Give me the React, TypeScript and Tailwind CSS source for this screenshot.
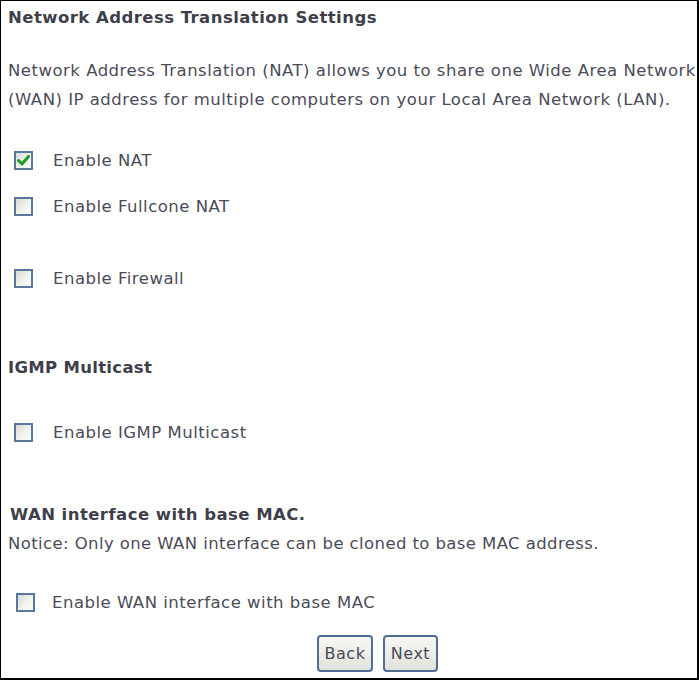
import React from "react";

const font = { fontFamily: '"DejaVu Sans", Tahoma, Verdana, sans-serif' };

function Check({ checked }: { checked?: boolean }) {
  return (
    <span className="flex h-[19px] w-[19px] shrink-0 items-center justify-center border-2 border-[#56799c] bg-gradient-to-br from-[#d8d8d4] via-[#f0f0ec] to-[#fbfbfa]">
      {checked && (
        <svg width="13" height="11" viewBox="0 0 13 11">
          <path d="M1.5 5.5 L5 9 L11.5 1.5" fill="none" stroke="#1f9a1f" strokeWidth="3" strokeLinecap="round" strokeLinejoin="round" />
        </svg>
      )}
    </span>
  );
}

function Row({ label, checked, className, gap = "ml-[20px]" }: { label: string; checked?: boolean; className: string; gap?: string }) {
  return (
    <div className={`flex h-[23px] items-center ${className}`}>
      <Check checked={checked} />
      <span className={gap}>{label}</span>
    </div>
  );
}

export default function App() {
  return (
    <div
      style={font}
      className="box-border h-[680px] w-[699px] border-t border-l border-r-2 border-b-2 border-black bg-white text-[16.5px] leading-[23px] tracking-[0.5px] text-[#4b4b58]"
    >
      <div className="pl-[7px] pt-[5px] font-bold tracking-[0.45px] text-[#3f3f4c]">Network Address Translation Settings</div>
      <div className="mt-[27px] pl-[7px] leading-[29px]">
        Network Address Translation (NAT) allows you to share one Wide Area Network
        <br />
        (WAN) IP address for multiple computers on your Local Area Network (LAN).
      </div>
      <Row className="mt-[35px] pl-[13px]" label="Enable NAT" checked />
      <Row className="mt-[23px] pl-[13px]" label="Enable Fullcone NAT" />
      <Row className="mt-[49px] pl-[13px]" label="Enable Firewall" />
      <div className="mt-[66px] pl-[7px] font-bold tracking-[0.3px] text-[#3f3f4c]">IGMP Multicast</div>
      <Row className="mt-[42px] pl-[13px]" label="Enable IGMP Multicast" />
      <div className="mt-[59px] pl-[9px] font-bold tracking-[0.45px] text-[#3f3f4c]">WAN interface with base MAC.</div>
      <div className="mt-[6px] pl-[7px] tracking-[0.4px]">Notice: Only one WAN interface can be cloned to base MAC address.</div>
      <Row className="mt-[36px] pl-[15px]" gap="ml-[17px]" label="Enable WAN interface with base MAC" />
      <div className="mt-[21px] flex justify-center gap-[10px] pl-[57px]">
        <button
          style={font}
          className="h-[37px] w-[56px] rounded-[4px] border-2 border-[#4e6f93] bg-gradient-to-b from-[#f7f7f5] to-[#e2e2dc] text-[16px] text-[#4b4b58]"
        >
          Back
        </button>
        <button
          style={font}
          className="h-[37px] w-[55px] rounded-[4px] border-2 border-[#4e6f93] bg-gradient-to-b from-[#f7f7f5] to-[#e2e2dc] text-[16px] text-[#4b4b58]"
        >
          Next
        </button>
      </div>
    </div>
  );
}
